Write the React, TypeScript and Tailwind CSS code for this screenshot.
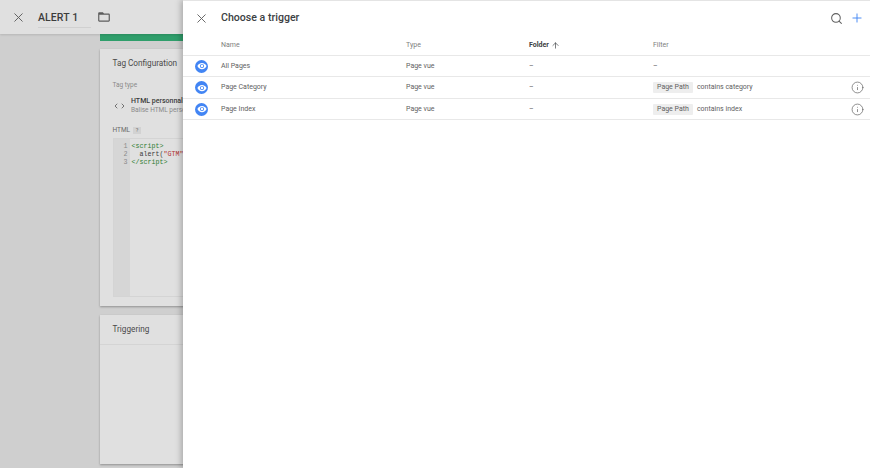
import { Search, Plus, X, ArrowUp, Info, ChevronLeft, ChevronRight } from "lucide-react";

const triggers = [
  { name: "All Pages", type: "Page vue", folder: "–", filter: null as string | null },
  { name: "Page Category", type: "Page vue", folder: "–", filter: "contains category" },
  { name: "Page Index", type: "Page vue", folder: "–", filter: "contains index" },
];

function TriggerRow({ t, h }: { t: (typeof triggers)[number]; h: string }) {
  return (
    <div className={`flex items-center border-b border-[#e8e8e8] text-[7px] text-[#616161] ${h}`}>
      <div className="w-[38px] flex justify-center pr-[1px]">
        <div className="w-[13px] h-[13px] rounded-full bg-[#4285f4] flex items-center justify-center">
          <svg viewBox="0 0 24 24" className="w-[10px] h-[10px] fill-white">
            <path d="M12 4.5C7 4.5 2.73 7.61 1 12c1.73 4.39 6 7.5 11 7.5s9.27-3.11 11-7.5c-1.73-4.39-6-7.5-11-7.5zM12 17c-2.76 0-5-2.24-5-5s2.24-5 5-5 5 2.24 5 5-2.24 5-5 5zm0-8c-1.66 0-3 1.34-3 3s1.34 3 3 3 3-1.34 3-3-1.34-3-3-3z" />
          </svg>
        </div>
      </div>
      <div className="w-[185px]">{t.name}</div>
      <div className="w-[123px]">{t.type}</div>
      <div className="w-[124px]">{t.folder}</div>
      <div className="flex-1 flex items-center">
        {t.filter ? (
          <>
            <span className="bg-[#eeeeee] rounded-[1px] px-[4px] h-[11px] leading-[11px] mr-[4px]">Page Path</span>
            <span>{t.filter}</span>
          </>
        ) : (
          "–"
        )}
      </div>
      {t.filter && <Info className="w-[13px] h-[13px] mr-[6px] text-[#616161]" strokeWidth={1.3} />}
    </div>
  );
}

export default function App() {
  return (
    <div className="relative w-[870px] h-[468px] overflow-hidden bg-[#cfcfcf] font-['Roboto',sans-serif]">
      <div className="h-[34px] bg-[#e0e0e0] flex items-center shadow-[0_1px_2px_rgba(0,0,0,0.12)] relative z-10">
        <X className="w-[15px] h-[15px] ml-[11px] text-[#5c5c5c]" strokeWidth={1.5} />
        <div className="ml-[12px] w-[53px] h-[21px] border-b border-[#d0d0d0] text-[10.5px] font-medium leading-[21px] text-[#3c3c3c] tracking-[0.1px]">
          ALERT 1
        </div>
        <svg viewBox="0 0 24 24" className="w-[14px] h-[14px] ml-[5.5px] fill-[#5c5c5c]">
          <path d="M20 6h-8l-2-2H4c-1.1 0-1.99.9-1.99 2L2 18c0 1.1.9 2 2 2h16c1.1 0 2-.9 2-2V8c0-1.1-.9-2-2-2zm0 12H4V8h16v10z" />
        </svg>
      </div>
      <div className="pl-[100px] w-[300px]">
        <div className="h-[7px] bg-[#2f9e6b]" />
        <div className="mt-[8px] h-[257px] bg-[#e0e0e0] shadow-[0_1px_2px_rgba(0,0,0,0.3)] px-[12.5px] pt-[8px]">
          <div className="text-[8.2px] text-[#4a4a4a] leading-[13px]">Tag Configuration</div>
          <div className="mt-[11px] text-[6.5px] text-[#8a8a8a] leading-[9px]">Tag type</div>
          <div className="mt-[7px] flex items-center -ml-[0.5px]">
            <ChevronLeft className="w-[8px] h-[8px] text-[#4a4a4a]" strokeWidth={2.2} />
            <ChevronRight className="w-[8px] h-[8px] -ml-[1px] text-[#4a4a4a]" strokeWidth={2.2} />
            <div className="ml-[4px]">
              <div className="text-[7px] font-medium text-[#3c3c3c] leading-[9px] whitespace-nowrap">HTML personnalisé</div>
              <div className="text-[6.5px] text-[#8a8a8a] leading-[9px] whitespace-nowrap">Balise HTML personnalisée</div>
            </div>
          </div>
          <div className="mt-[11px] flex items-center text-[6.5px] text-[#6a6a6a]">
            HTML
            <span className="ml-[3px] w-[8px] h-[7px] bg-[#d2d2d2] text-center leading-[7px] text-[5.5px]">?</span>
          </div>
          <div className="mt-[2px] h-[159px] border border-[#d4d4d4] flex font-['Liberation_Mono',monospace] text-[6.67px] leading-[8.2px]">
            <div className="w-[16px] bg-[#d6d6d6] pt-[3px] pr-[2px] text-right text-[#8a8a8a]">
              <div>1</div>
              <div>2</div>
              <div>3</div>
            </div>
            <div className="pl-[2px] pt-[3px] whitespace-nowrap">
              <div className="text-[#2e7d32]">&lt;script&gt;</div>
              <div className="pl-[8px] text-[#3c3c3c]">
                alert(<span className="text-[#b03030]">"GTM"</span>)
              </div>
              <div className="text-[#2e7d32]">&lt;/script&gt;</div>
            </div>
          </div>
        </div>
        <div className="mt-[9px] h-[149px] bg-[#e0e0e0] shadow-[0_1px_2px_rgba(0,0,0,0.3)]">
          <div className="h-[30px] px-[12.5px] border-b border-[#d4d4d4] text-[8.2px] leading-[29px] text-[#4a4a4a]">Triggering</div>
        </div>
      </div>

      <div className="absolute z-20 left-[183px] top-0 right-0 bottom-0 bg-white border-t border-[#e4e4e4] shadow-[-2px_0_6px_rgba(0,0,0,0.25)]">
        <div className="h-[34px] flex items-center">
          <X className="w-[15px] h-[15px] ml-[11px] text-[#616161]" strokeWidth={1.5} />
          <div className="ml-[12px] text-[10.6px] font-medium text-[#3c4043]">Choose a trigger</div>
          <div className="flex-1" />
          <Search className="w-[13px] h-[13px] text-[#616161]" strokeWidth={1.9} />
          <Plus className="w-[14px] h-[14px] ml-[7px] mr-[6px] text-[#4285f4]" strokeWidth={1.6} />
        </div>
        <div className="h-[21px] flex items-center border-b border-[#e8e8e8] text-[7px] text-[#808080]">
          <div className="w-[38px]" />
          <div className="w-[185px]">Name</div>
          <div className="w-[123px]">Type</div>
          <div className="w-[124px] flex items-center font-bold text-[#3c4043]">
            Folder
            <ArrowUp className="w-[9px] h-[9px] ml-[2px]" strokeWidth={1.8} />
          </div>
          <div>Filter</div>
        </div>
        <TriggerRow t={triggers[0]} h="h-[21px]" />
        <TriggerRow t={triggers[1]} h="h-[22px]" />
        <TriggerRow t={triggers[2]} h="h-[21px]" />
      </div>
    </div>
  );
}
